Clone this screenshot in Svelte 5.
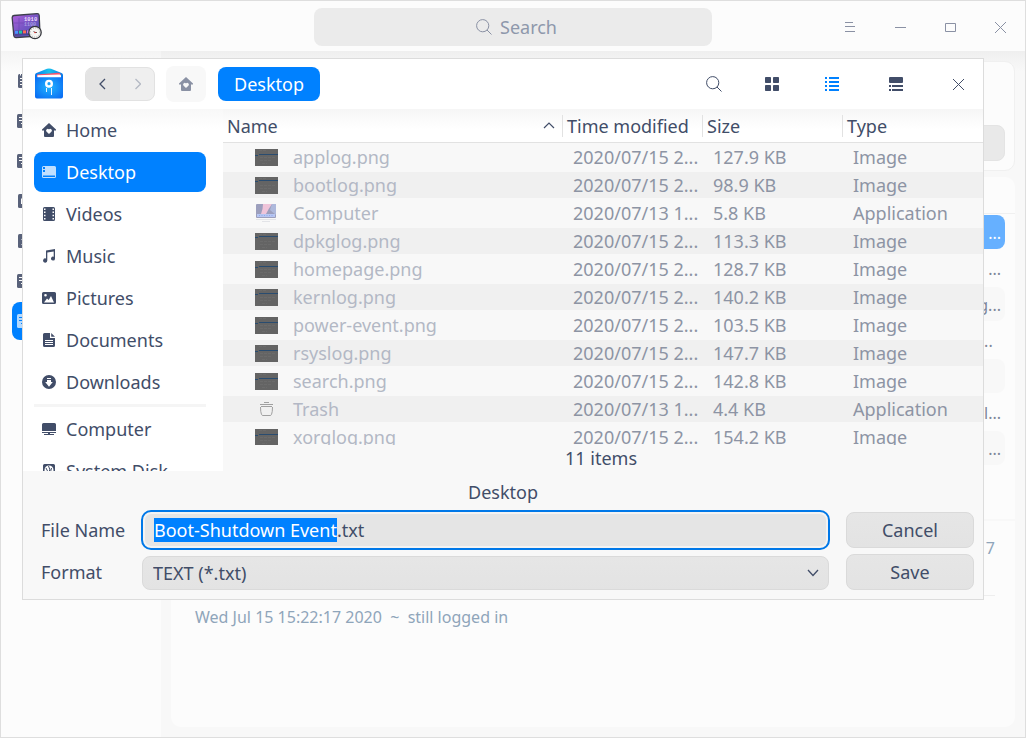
<script>
  import { onMount } from 'svelte';

  const places = [
    { name: 'Home', icon: 'home' },
    { name: 'Desktop', icon: 'desktop', active: true },
    { name: 'Videos', icon: 'video' },
    { name: 'Music', icon: 'music' },
    { name: 'Pictures', icon: 'picture' },
    { name: 'Documents', icon: 'document' },
    { name: 'Downloads', icon: 'download' }
  ];
  const devices = [
    { name: 'Computer', icon: 'computer' },
    { name: 'System Disk', icon: 'disk' }
  ];
  const files = [
    { name: 'applog.png', time: '2020/07/15 2...', size: '127.9 KB', type: 'Image', bar: 5 },
    { name: 'bootlog.png', time: '2020/07/15 2...', size: '98.9 KB', type: 'Image', bar: 3 },
    { name: 'Computer', time: '2020/07/13 1...', size: '5.8 KB', type: 'Application', icon: 'computer' },
    { name: 'dpkglog.png', time: '2020/07/15 2...', size: '113.3 KB', type: 'Image', bar: 3 },
    { name: 'homepage.png', time: '2020/07/15 2...', size: '128.7 KB', type: 'Image', bar: 5 },
    { name: 'kernlog.png', time: '2020/07/15 2...', size: '140.2 KB', type: 'Image', bar: 4 },
    { name: 'power-event.png', time: '2020/07/15 2...', size: '103.5 KB', type: 'Image', bar: 5 },
    { name: 'rsyslog.png', time: '2020/07/15 2...', size: '147.7 KB', type: 'Image', bar: 5 },
    { name: 'search.png', time: '2020/07/15 2...', size: '142.8 KB', type: 'Image', bar: 5 },
    { name: 'Trash', time: '2020/07/13 1...', size: '4.4 KB', type: 'Application', icon: 'trash' },
    { name: 'xorglog.png', time: '2020/07/15 2...', size: '154.2 KB', type: 'Image', bar: 5 }
  ];
  const logKinds = ['clip', 'doc', 'doc', 'box', 'lines', 'doc', 'doc'];
  const logRows = ['...', '...', 'g...', '...\u00a0\u00a0', '', 'l...', '...'];

  let fileName = $state('Boot-Shutdown Event.txt');
  let nameInput;

  onMount(() => {
    nameInput.focus();
    nameInput.setSelectionRange(0, fileName.lastIndexOf('.'));
  });
</script>

{#snippet placeIcon(kind)}
  <svg width="14" height="14" viewBox="0 0 14 14" fill="currentColor" aria-hidden="true">
    {#if kind === 'home'}
      <path fill-rule="evenodd" d="M7 0 14 6.6V7.5H12V13a1 1 0 0 1-1 1H3a1 1 0 0 1-1-1V7.5H0V6.6ZM7 11 9.6 8.4A1.4 1.4 0 0 0 7 6.6 1.4 1.4 0 0 0 4.4 8.4Z" />
    {:else if kind === 'desktop'}
      <path fill-rule="evenodd" opacity=".75" d="M1.5 1H12.500A1.500 1.500 0 0 1 14 2.500V11.500A1.500 1.500 0 0 1 12.500 13H1.500A1.500 1.500 0 0 1 0 11.500V2.500A1.500 1.500 0 0 1 1.500 1ZM1 2V4H3V2ZM1 5V7H3V5ZM1 10.500V12H13V10.500Z" />
    {:else if kind === 'video'}
      <path fill-rule="evenodd" d="M2.500 0H11.500A1.500 1.500 0 0 1 13 1.500V12.500A1.500 1.500 0 0 1 11.500 14H2.500A1.500 1.500 0 0 1 1 12.500V1.500A1.500 1.500 0 0 1 2.500 0ZM2 1.500V3H3.500V1.500ZM2 4.500V6H3.500V4.500ZM2 7.800V9.300H3.500V7.800ZM2 11V12.500H3.500V11ZM10.500 1.500V3H12V1.500ZM10.500 4.500V6H12V4.500ZM10.500 7.800V9.300H12V7.800ZM10.500 11V12.500H12V11Z" />
    {:else if kind === 'music'}
      <path d="M4 1.500 13 0V9.500A2 2 0 1 1 11.700 7.700V2.500L5.300 3.500V11.500A2.100 2.100 0 1 1 4 9.600Z" />
    {:else if kind === 'picture'}
      <path fill-rule="evenodd" d="M1.500 1H12.500A1.500 1.500 0 0 1 14 2.500V11.500A1.500 1.500 0 0 1 12.500 13H1.500A1.500 1.500 0 0 1 0 11.500V2.500A1.500 1.500 0 0 1 1.500 1ZM3.500 3A1.300 1.300 0 1 0 3.500 5.600 1.300 1.300 0 0 0 3.500 3ZM2 11.500H12L9 5 6.700 9 5 7.500Z" />
    {:else if kind === 'document'}
      <path fill-rule="evenodd" d="M2.500 0H8V5H13V12.500A1.500 1.500 0 0 1 11.500 14H2.500A1.500 1.500 0 0 1 1 12.500V1.500A1.500 1.500 0 0 1 2.500 0ZM9.200 0 13 3.800H9.200ZM3 7V8H11V7ZM3 9V10H11V9ZM3 11V12H11V11Z" />
    {:else if kind === 'download'}
      <path fill-rule="evenodd" d="M7 0A7 7 0 1 1 7 14 7 7 0 0 1 7 0ZM5 3V4H9V3ZM5 5V7H3.200L7 11.800 10.800 7H9V5Z" />
    {:else if kind === 'computer'}
      <path d="M1.500 1H12.500A1.500 1.500 0 0 1 14 2.500V9H0V2.500A1.500 1.500 0 0 1 1.500 1ZM0 10H14V11H8V12H12V13H2V12H6V11H0Z" />
    {:else}
      <path fill-rule="evenodd" d="M2.500 0H11.500A1.500 1.500 0 0 1 13 1.500V12.500A1.500 1.500 0 0 1 11.500 14H2.500A1.500 1.500 0 0 1 1 12.500V1.500A1.500 1.500 0 0 1 2.500 0ZM7 1.500A4.500 4.500 0 1 0 7 10.500 4.500 4.500 0 0 0 7 1.500Z" />
      <path d="M6.500 2 8 6 6 8M4 4 5.500 7M9.500 4 8.500 8" fill="none" stroke="currentColor" />
    {/if}
  </svg>
{/snippet}

{#snippet lens(size)}
  <svg width={size} height={size} viewBox="0 0 16 16" fill="none" stroke="currentColor" aria-hidden="true">
    <circle cx="6.700" cy="6.700" r="6.100" /><path d="M11 11 15.500 15.500" />
  </svg>
{/snippet}

{#snippet cross()}
  <svg width="11" height="11" viewBox="0 0 11 11" fill="none" stroke="currentColor" aria-hidden="true">
    <path d="M0 0 11 11M11 0 0 11" />
  </svg>
{/snippet}

<div class="window">
  <header class="titlebar">
    <svg class="app-logo" width="32" height="28" viewBox="0 0 32 28" aria-hidden="true">
      <defs>
        <linearGradient id="screen" x1="0" y1="0" x2="1" y2="1">
          <stop offset="0" stop-color="#b262dc" /><stop offset=".5" stop-color="#7655c4" /><stop offset="1" stop-color="#4a55b6" />
        </linearGradient>
      </defs>
      <path d="M3 2.500 26 .700Q28 .500 28.200 2.500L29 21Q29 23 27 23.200L5 24.500Q3 24.600 2.800 22.600L1.200 5Q1 2.700 3 2.500Z" fill="url(#screen)" stroke="#3b3d4a" stroke-width="1.300" />
      <path d="M3.500 17.600 27 16.500V21.500L4 23Z" fill="#303b72" opacity=".55" />
      <path d="M8 5V17M3 10H14" stroke="#683fad" opacity=".5" />
      <text x="13" y="8" font-size="5.500" fill="#f0dcff" class="digits">1010</text>
      <text x="13" y="13" font-size="5" fill="#a79ce0" class="digits">1100</text>
      <path d="M4 17.800H7V20.800H4Z" fill="#4994ff" /><path d="M8 17.600H11V20.600H8Z" fill="#20c7a5" /><path d="M12 17.400H15V20.400H12Z" fill="#fc6a55" /><path d="M16 17.200H18V20.200H16Z" fill="#c077e4" />
      <circle cx="24" cy="19.500" r="6.200" fill="#f5f5f3" stroke="#34353b" stroke-width="1.300" />
      <circle cx="24" cy="19.500" r="4.600" fill="none" stroke="#858585" stroke-width="1" stroke-dasharray=".6 1.800" />
      <path d="M22.500 18 24 19.500H26" fill="none" stroke="#333" stroke-width=".8" /><circle cx="24" cy="19.500" r=".8" fill="#d33" />
    </svg>
    <label class="search">
      {@render lens(16)}
      <input type="search" placeholder="Search" aria-label="Search" />
    </label>
    <div class="window-controls">
      <button aria-label="Menu"><svg width="10" height="12" viewBox="0 0 10 12" stroke="currentColor"><path d="M0 1.500H8M0 5.500H10M0 10.500H10" /></svg></button>
      <button aria-label="Minimize"><svg width="11" height="11" viewBox="0 0 11 11" stroke="currentColor"><path d="M0 5.500H11" /></svg></button>
      <button aria-label="Maximize"><svg width="11" height="9" viewBox="0 0 11 9" fill="none" stroke="currentColor"><path d="M.5 .5H10.500V8.500H.5Z" /></svg></button>
      <button aria-label="Close window">{@render cross()}</button>
    </div>
  </header>

  <div class="workspace">
    <nav class="log-nav" aria-label="Logs">
      {#each logKinds as kind, i}
        <button class:active={i === 6} aria-label={`Log ${i + 1}`}>
          <svg width="14" height="14" viewBox="0 0 14 14" aria-hidden="true">
            <rect x={kind === 'doc' ? 0 : 1} width="13" height="14" rx="1.500" fill="currentColor" />
            {#if kind === 'clip'}
              <path d="M3.500 0V1.500M3 4.500H9M3 7.500H9M3 10.500H9" stroke="#fcfcfc" />
            {:else if kind === 'doc'}
              <path d="M2 3.500H10M2 6.500H10M4 9.500H10" stroke={i === 6 ? '#0081ff' : '#fcfcfc'} />
            {:else if kind === 'lines'}
              <path d="M4 5.500H9M4 10.500H9" stroke="#aeb4c2" />
            {:else}
              <path d="M4 4.500H9V10H4Z" fill="#fcfcfc" />
            {/if}
          </svg>
        </button>
      {/each}
    </nav>

    <main class="log-main">
      <section class="card filters"><button aria-label="Export"></button></section>
      <section class="card log-list">
        <div class="log-head"></div>
        {#each logRows as text, i}
          <div class="log-row" class:selected={i === 0} class:striped={i % 2 === 0 && i > 0}>{text}</div>
        {/each}
      </section>
      <section class="card log-detail">
        <p class="pid">7</p>
        <p class="session">Wed Jul 15 15:22:17 2020&nbsp; ~&nbsp; still logged in</p>
      </section>
    </main>
  </div>

  <div class="dialog" role="dialog" aria-label="Save file">
    <header class="dialog-bar">
      <svg class="files-logo" width="28" height="32" viewBox="0 0 28 32" aria-hidden="true">
        <defs>
          <radialGradient id="pocket" cx=".5" cy=".5" r=".7"><stop offset="0" stop-color="#21b5ff" /><stop offset="1" stop-color="#0866f2" /></radialGradient>
          <linearGradient id="flap" x1="0" x2="1"><stop offset="0" stop-color="#0877ee" /><stop offset=".5" stop-color="#18c3ee" /><stop offset="1" stop-color="#0878e8" /></linearGradient>
        </defs>
        <path d="M0 11V7Q0 5.500 1.500 5L12 .8Q14 0 16 .8L26.500 5Q28 5.500 28 7V11Z" fill="url(#flap)" />
        <path d="M2 6.500 23.500 4.800Q25.500 4.800 25.800 7V9H2Z" fill="#f8536d" />
        <path d="M2.500 7.300 24.500 6.500Q26 6.500 26 8V10H2.500Z" fill="#fff" />
        <path d="M0 7.500Q0 9.300 2 9.300H26Q28 9.300 28 7.500V28.500Q28 30.500 26 30.500H2Q0 30.500 0 28.500Z" fill="url(#pocket)" />
        <circle cx="14" cy="15.700" r="2.800" fill="none" stroke="#fff" stroke-width="2.400" />
        <path d="M11.500 20V24M16.500 20V27" stroke="#fff" stroke-width=".9" />
      </svg>
      <div class="history">
        <button aria-label="Back"><svg width="8" height="12" viewBox="0 0 8 12" fill="none" stroke="currentColor" stroke-width="1.300"><path d="M6 1 1 6 6 11" /></svg></button>
        <button aria-label="Forward" disabled><svg width="8" height="12" viewBox="0 0 8 12" fill="none" stroke="currentColor" stroke-width="1.300"><path d="M2.500 1 7.500 6 2.500 11" /></svg></button>
      </div>
      <button class="crumb-home" aria-label="Home">{@render placeIcon('home')}</button>
      <button class="crumb">Desktop</button>
      <div class="tools">
        <button aria-label="Search files">{@render lens(16)}</button>
        <div class="views">
          <button aria-label="Icon view"><svg width="14" height="14" viewBox="0 0 14 14" fill="currentColor"><rect width="6" height="6" rx=".7" /><rect x="8" width="6" height="6" rx=".7" /><rect y="8" width="6" height="6" rx=".7" /><rect x="8" y="8" width="6" height="6" rx=".7" /></svg></button>
          <button class="on" aria-label="List view"><svg width="14" height="14" viewBox="0 0 14 14" fill="currentColor"><path d="M0 0H2V2H0ZM4 0H14V2H4ZM0 4H2V6H0ZM4 4H14V6H4ZM0 8H2V10H0ZM4 8H14V10H4ZM0 12H2V14H0ZM4 12H14V14H4Z" /></svg></button>
        </div>
        <div class="extras">
          <button aria-label="Detail view"><svg width="14" height="16" viewBox="0 0 14 16" fill="currentColor"><rect y="1" width="14" height="6" rx="1" /><path d="M0 9H2V11H0ZM3 9H14V11H3ZM0 13H2V15H0ZM3 13H14V15H3Z" /></svg></button>
          <button aria-label="Close dialog">{@render cross()}</button>
        </div>
      </div>
    </header>

    <div class="browser">
      <nav class="places" aria-label="Places">
        {#each places as place}
          <button class:active={place.active}>{@render placeIcon(place.icon)}{place.name}</button>
        {/each}
        <hr />
        {#each devices as place}
          <button>{@render placeIcon(place.icon)}{place.name}</button>
        {/each}
      </nav>

      <div class="listing">
        <div class="table-clip">
          <table>
            <thead>
              <tr>
                <th scope="col" class="col-name">
                  <span>Name <svg width="12" height="7" viewBox="0 0 12 7" fill="none" stroke="currentColor" stroke-width="1.200" aria-hidden="true"><path d="M1 6 6 1 11 6" /></svg></span>
                </th>
                <th scope="col"><span>Time modified</span></th>
                <th scope="col"><span>Size</span></th>
                <th scope="col" class="col-type"><span>Type</span></th>
              </tr>
            </thead>
            <tbody>
              {#each files as file}
                <tr>
                  <td>
                    <div class="file">
                      {#if file.icon === 'computer'}
                        <svg width="23" height="20" viewBox="0 0 23 20" aria-hidden="true">
                          <rect x="1" y="1" width="20" height="14" rx="1" fill="#9c9fbd" />
                          <path d="M8 1H17Q14 5 11 11H6Q8 6 8 1Z" fill="#efc4d9" /><path d="M17 1H21V12L15 7Z" fill="#aeb9dc" />
                          <path d="M2 11H20V14H2Z" fill="#b7c6f2" /><path d="M4 12.500H18" stroke="#8fa9ee" stroke-dasharray="1 1.500" />
                          <path d="M1 16.500H21M7 18.500H15" stroke="#e3e4e8" />
                        </svg>
                      {:else if file.icon === 'trash'}
                        <svg width="23" height="16" viewBox="0 0 23 16" fill="none" stroke="#a0a0a0" aria-hidden="true">
                          <path d="M9 1.500H14M5 3.500H18M6 5.500H17M5.500 6Q5.500 11 6.500 13.500Q7 14.500 8 14.500H15Q16 14.500 16.500 13.500Q17.500 11 17.500 6" />
                        </svg>
                      {:else}
                        <svg width="23" height="17" viewBox="0 0 23 17" aria-hidden="true">
                          <rect width="23" height="17" fill="#646464" />
                          <path d="M4 1.500H12M5 8.500H21M5 11.500H17M7 14.500H12" stroke="#6b6b6b" stroke-dasharray="3 1" />
                          <path d={`M4 ${file.bar + 0.5}H23M0 ${file.bar + 1.5}H3`} stroke="#294c70" />
                        </svg>
                      {/if}
                      {file.name}
                    </div>
                  </td>
                  <td>{file.time}</td>
                  <td>{file.size}</td>
                  <td>{file.type}</td>
                </tr>
              {/each}
            </tbody>
          </table>
        </div>
        <p class="count">11 items</p>
      </div>
    </div>

    <footer>
      <p class="folder">Desktop</p>
      <div class="form">
        <label for="file-name">File Name</label>
        <input id="file-name" type="text" bind:value={fileName} bind:this={nameInput} spellcheck="false" />
        <button>Cancel</button>
        <label for="format">Format</label>
        <div class="select-wrap">
          <select id="format"><option>TEXT (*.txt)</option></select>
          <svg width="12" height="8" viewBox="0 0 12 8" fill="none" stroke="currentColor" stroke-width="1.300" aria-hidden="true"><path d="M1 1 6 6.500 11 1" /></svg>
        </div>
        <button>Save</button>
      </div>
    </footer>
  </div>
</div>

<style>
  :global(body) { margin: 0; }
  * { box-sizing: border-box; }
  .window {
    position: relative;
    display: flex;
    flex-direction: column;
    height: 100vh;
    border: 1px solid #dedede;
    background: #f8f8f8;
    color: #414d68;
    font: 18px/24px "Noto Sans", sans-serif;
    overflow: hidden;
  }
  button, input, select { font: inherit; color: inherit; border: 0; padding: 0; background: none; outline: none; }
  button { display: flex; align-items: center; justify-content: center; }
  svg { display: block; flex: none; }
  p { margin: 0; }

  .titlebar {
    display: grid;
    grid-template-columns: 1fr minmax(0, 398px) 1fr;
    align-items: center;
    height: 50px;
    flex: none;
    background: #fcfcfc;
    color: #8a91a4;
  }
  .app-logo { margin-left: 10px; }
  .digits { font-family: "Liberation Mono", monospace; font-weight: bold; }
  .search {
    display: flex;
    align-items: center;
    gap: 8px;
    height: 38px;
    padding-left: calc(50% - 37px);
    border-radius: 8px;
    background: #ebebeb;
  }
  .search input { flex: 1; min-width: 0; }
  .search input::placeholder { color: #8e98ab; opacity: 1; }
  .window-controls { display: flex; justify-content: flex-end; }
  .window-controls button { width: 50px; height: 52px; }

  .workspace { display: flex; flex: 1; min-height: 0; }
  .log-nav {
    display: flex;
    flex-direction: column;
    flex: none;
    gap: 2px;
    width: 160px;
    padding: 11px 11px 0;
    background: linear-gradient(#f4f4f4, #fcfcfc 20px);
    color: #59627a;
  }
  .log-nav button { justify-content: flex-start; height: 38px; padding-left: 5px; border-radius: 8px; }
  .log-nav .active { background: #0081ff; color: #b2d9ff; }
  .log-main {
    display: flex;
    flex-direction: column;
    flex: 1;
    padding: 10px;
    background: linear-gradient(#efefef, #f8f8f8 20px);
  }
  .card { background: #fcfcfc; }
  .filters {
    display: flex;
    justify-content: flex-end;
    align-items: flex-end;
    height: 110px;
    padding: 9px;
    border: 1px solid #f0f0f0;
    border-radius: 10px;
  }
  .filters button { width: 100px; height: 36px; border: 1px solid #e4e4e4; border-radius: 8px; background: #e9e9e9; }
  .log-list { height: 342px; margin-top: 6px; padding: 0 10px; border-radius: 10px 10px 0 0; font-size: 16px; color: #7d8699; }
  .log-head { height: 37px; margin: 0 -10px 1px; border-bottom: 1px solid #f0f0f0; }
  .log-row { height: 34px; margin-bottom: 2px; padding-right: 4px; border-radius: 8px; line-height: 36px; text-align: right; }
  .striped { background: #f8f8f8; }
  .selected { background: #66b0ff; color: #fff; }
  .log-detail { flex: 1; margin-top: 2px; padding: 15px 20px 0 24px; border-radius: 0 0 10px 10px; font-size: 16px; color: #8fa5ba; }
  .pid { height: 60px; border-bottom: 1px solid #eee; text-align: right; }
  .session { padding-top: 9px; }

  .dialog {
    position: absolute;
    inset: 57px 41px 137px 21px;
    display: flex;
    flex-direction: column;
    border: 1px solid #dcdcdc;
    background: #f8f8f8;
  }
  .dialog-bar { display: flex; align-items: center; flex: none; height: 50px; padding-left: 12px; background: #fff; }
  .history { display: flex; margin-left: 22px; border: 1px solid #e2e2e2; border-radius: 8px; background: #efefef; overflow: hidden; }
  .history button { width: 34px; height: 32px; }
  .history button:first-child { background: #e4e4e4; }
  .history button:disabled { color: #b4b9c4; }
  .crumb-home { width: 40px; height: 36px; margin: 0 12px 0 11px; border-radius: 8px; background: #f8f8f8; color: #8a91a4; }
  .crumb { height: 34px; padding: 0 16px; border-radius: 8px; background: #0081ff; color: #fff; }
  .tools { display: flex; margin-left: auto; }
  .tools button { width: 50px; height: 50px; }
  .views { display: flex; gap: 10px; margin: 0 14px 0 8px; }
  .extras { display: flex; gap: 12px; }
  .tools .on { color: #0081ff; }

  .browser { display: flex; flex: 1; min-height: 0; overflow: hidden; }
  .places {
    display: flex;
    flex-direction: column;
    gap: 2px;
    width: 200px;
    flex: none;
    padding: 1px 17px 0 11px;
    background: linear-gradient(#f8f8f8, #fff 20px);
    overflow: hidden;
  }
  .places button { flex: none; justify-content: flex-start; gap: 10px; height: 40px; padding-left: 8px; border-radius: 8px; }
  .places .active { background: #0081ff; color: #fff; }
  .places hr { flex: none; width: 100%; height: 3px; margin: 0; border: 0; background: #f5f5f5; }

  .listing { display: flex; flex-direction: column; flex: 1; min-width: 0; }
  .table-clip { flex: 1; min-height: 0; overflow: hidden; }
  table { width: 100%; table-layout: fixed; border-spacing: 0; }
  th, td { padding: 0; text-align: left; font-weight: normal; white-space: nowrap; }
  thead tr { background: linear-gradient(#f6f6f6, #fff 20px); }
  th { width: 140px; height: 34px; border-bottom: 1px solid #e2e2e2; }
  th span { display: flex; align-items: center; height: 22px; padding-left: 4px; border-left: 1px solid #e2e2e2; }
  .col-name { width: auto; }
  .col-type { width: 141px; }
  .col-name span { justify-content: space-between; padding-right: 7px; border-left: 0; }
  td { height: 28px; padding-left: 11px; border: solid #f8f8f8; border-width: 1px 0; color: #8d94a4; }
  td:first-child { padding-left: 32px; color: #b3b8c5; }
  tbody tr:nth-child(even) td { background: #f0f0f0; }
  .file { display: flex; align-items: center; gap: 15px; }
  .count { flex: none; height: 26px; padding-right: 4px; line-height: 26px; text-align: center; }

  footer { flex: none; }
  .folder { height: 39px; padding-top: 9px; text-align: center; }
  .form { display: grid; grid-template-columns: 84px 1fr 128px; grid-template-rows: 40px 36px; gap: 4px 16px; align-items: center; padding: 0 9px 9px 18px; }
  .form label { white-space: nowrap; }
  .form input {
    width: 100%;
    height: 40px;
    padding: 0 11px;
    border: 2px solid #0078e8;
    border-radius: 10px;
    background: #e5e5e5;
    box-shadow: inset 0 0 0 2px #f3f3f3;
  }
  .form input::selection { background: #0081ff; color: #fff; }
  .form button, .form select { height: 36px; border: 1px solid #dadada; border-radius: 8px; background: linear-gradient(#e6e6e6, #e3e3e3); }
  .select-wrap { position: relative; align-self: end; padding: 0 1px; }
  .form select { display: block; width: 100%; height: 34px; padding: 0 10px; appearance: none; }
  .select-wrap svg { position: absolute; right: 11px; top: 13px; pointer-events: none; }
</style>
